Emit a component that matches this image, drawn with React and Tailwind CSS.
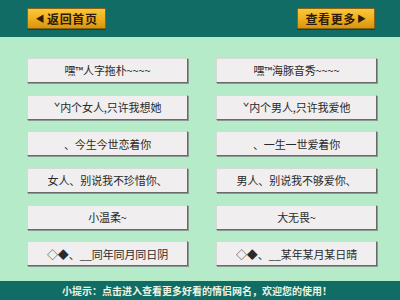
import React from "react";

const left = [
  "嘿™人字拖朴~~~~",
  "ˇ内个女人,只许我想她",
  "、今生今世恋着你",
  "女人、别说我不珍惜你、",
  "小温柔~",
  "◇◆、__同年同月同日阴",
];
const right = [
  "嘿™海豚音秀~~~~",
  "ˇ内个男人,只许我爱他",
  "、一生一世爱着你",
  "男人、别说我不够爱你、",
  "大无畏~",
  "◇◆、__某年某月某日晴",
];

const font = { fontFamily: '"Noto Sans CJK SC", "Noto Sans", sans-serif' };

function Card({ text }) {
  return (
    <div className="h-[25px] flex items-center justify-center bg-[#f0eeee] border border-t-[#d8d8d8] border-l-[#d8d8d8] border-r-[#6a6a6a] border-b-[#6a6a6a] shadow-[1px_1px_0_#8a9a90] text-[11px] tracking-[-0.1px] text-[#2a2a2a]">
      {text}
    </div>
  );
}

function GoldButton({ children }) {
  return (
    <div className="h-[21px] flex items-center justify-center rounded-[1px] border border-[#8a6410] bg-gradient-to-b from-[#f8c83a] via-[#f0b020] to-[#d89410] text-[12px] font-bold tracking-[0.6px] text-[#2e1a06] shadow-[0_1px_0_#0a4a44]">
      {children}
    </div>
  );
}

export default function App() {
  const rows = left.map((l, i) => [l, right[i]]);
  return (
    <div className="w-[400px] h-[300px] flex flex-col bg-[#b6ebca] overflow-hidden" style={font}>
      <div className="h-[37px] bg-[#126c66] flex items-center justify-between pl-[27px] pr-[25px] shrink-0">
        <div className="w-[79px]">
          <GoldButton>
            <span className="text-[9px] mr-[2px]">◀</span>
            <span>返回首页</span>
          </GoldButton>
        </div>
        <div className="w-[78px]">
          <GoldButton>
            <span>查看更多</span>
            <span className="text-[9px] ml-[1px]">▶</span>
          </GoldButton>
        </div>
      </div>
      <div className="flex-1 pt-[21px] pl-[27px] pr-[23px]">
        <div className="grid grid-cols-[161px_161px] gap-x-[28px] gap-y-[11.7px]">
          {rows.map(([l, r], i) => (
            <React.Fragment key={i}>
              <Card text={l} />
              <Card text={r} />
            </React.Fragment>
          ))}
        </div>
      </div>
      <div className="h-[19px] bg-[#126c66] flex items-center justify-center pr-[6px] shrink-0 text-[10px] font-bold tracking-[0px] text-[#eef4e0]">
        小提示：点击进入查看更多好看的情侣网名，欢迎您的使用！
      </div>
    </div>
  );
}
